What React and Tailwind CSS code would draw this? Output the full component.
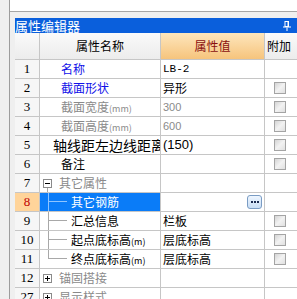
import React from 'react'

const CJK = "font-['Noto_Sans_CJK_SC','Noto_Sans',sans-serif]"

const rows = [
  { n: '1', name: '名称', tone: 'blue', value: 'LB-2', vkind: 'mono' },
  { n: '2', name: '截面形状', tone: 'blue', value: '异形', check: true },
  { n: '3', name: '截面宽度', unit: '(mm)', tone: 'gray', value: '300', vkind: 'grayNum', check: true },
  { n: '4', name: '截面高度', unit: '(mm)', tone: 'gray', value: '600', vkind: 'grayNum', check: true },
  { n: '5', name: '轴线距左边线距离', tone: 'big', value: '(150)', vkind: 'big', check: true },
  { n: '6', name: '备注', tone: 'black', value: '', check: true },
  { n: '7', name: '其它属性', tone: 'gray', tree: 'minus' },
  { n: '8', name: '其它钢筋', tone: 'sel', tree: 'child', selected: true, dots: true },
  { n: '9', name: '汇总信息', tone: 'black', tree: 'child', value: '栏板', check: true },
  { n: '10', name: '起点底标高', unit: '(m)', tone: 'black', tree: 'child', value: '层底标高', check: true },
  { n: '11', name: '终点底标高', unit: '(m)', tone: 'black', tree: 'last', value: '层底标高', check: true },
  { n: '12', name: '锚固搭接', tone: 'gray', tree: 'plus' },
  { n: '27', name: '显示样式', tone: 'gray', tree: 'plus' },
]

const toneClass = {
  blue: 'text-[#1010e8]',
  gray: 'text-[#8a8a8a]',
  black: 'text-black',
  big: 'text-black text-[14px]',
  sel: 'text-white',
}

const Checkbox = () => (
  <div className="ml-[9px] w-[12px] h-[12px] border border-[#a4a4a4] bg-gradient-to-br from-[#d4d4d4] via-[#f2f2f2] to-[#e0e0e0]" />
)

const PlusMinus = ({ plus }) => (
  <div className="w-[9px] h-[9px] border border-[#8a8a8a] bg-white flex items-center justify-center relative">
    <div className="w-[5px] h-px bg-black" />
    {plus && <div className="absolute w-px h-[5px] bg-black" />}
  </div>
)

const TreeLine = ({ last, selected }) => {
  const c = selected ? 'border-[#8ec4ff]' : 'border-[#a8a8a8]'
  return (
    <div className="ml-[8px] w-[19px] h-full flex flex-col">
      <div className={`h-1/2 border-l border-b ${c}`} />
      <div className={`h-1/2 ${last ? '' : `border-l ${c}`}`} />
    </div>
  )
}

const NameCell = ({ r }) => {
  const text = (
    <span className={`whitespace-nowrap ${toneClass[r.tone]}`}>
      {r.name}
      {r.unit && <span className="text-[9px]">{r.unit}</span>}
    </span>
  )
  if (r.tree === 'minus' || r.tree === 'plus') {
    return (
      <div className="flex items-center h-full">
        <div className="ml-[3px] relative">
          <PlusMinus plus={r.tree === 'plus'} />
          {r.tree === 'minus' && (
            <div className="absolute left-[4px] top-[9px] w-px h-[6px] bg-[#a8a8a8]" />
          )}
        </div>
        <div className="ml-[7px]">{text}</div>
      </div>
    )
  }
  if (r.tree) {
    return (
      <div className={`flex items-center h-full ${r.selected ? 'bg-[#0a7cf8]' : ''}`}>
        <TreeLine last={r.tree === 'last'} selected={r.selected} />
        <div className="ml-[4px]">{text}</div>
      </div>
    )
  }
  return (
    <div className={`flex items-center h-full ${r.tone === 'big' ? 'pl-[13px]' : 'pl-[21px]'}`}>{text}</div>
  )
}

const ValueCell = ({ r }) => {
  let cls = 'text-black text-[12px]'
  if (r.vkind === 'mono') cls = "font-['Liberation_Mono',monospace] text-[11px] text-black"
  if (r.vkind === 'grayNum') cls = "font-['Liberation_Sans',sans-serif] text-[11px] text-[#8a8a8a]"
  if (r.vkind === 'big') cls = "font-['Liberation_Sans',sans-serif] text-[13px] text-black"
  return (
    <div className="flex items-center h-full pl-[2px] pr-[2px]">
      <span className={`whitespace-nowrap flex-1 ${cls}`}>{r.value}</span>
      {r.dots && (
        <div className="w-[15px] h-[14px] rounded-[3px] border border-[#7a9cc4] bg-gradient-to-b from-[#eef6ff] to-[#c9def5] flex items-center justify-center gap-px">
          <div className="w-[2px] h-[2px] bg-[#1a2a50]" />
          <div className="w-[2px] h-[2px] bg-[#1a2a50]" />
          <div className="w-[2px] h-[2px] bg-[#1a2a50]" />
        </div>
      )}
    </div>
  )
}

const Row = ({ r }) => (
  <div className="flex h-[19px] shrink-0 border-b border-[#c6c6c6]">
    <div
      className={`w-[25px] shrink-0 border-r border-[#c6c6c6] flex items-center justify-center font-['Liberation_Serif',serif] text-[13px] ${
        r.selected ? 'bg-[#ffd49a] text-[#c00000]' : 'bg-[#f6f6f6] text-black'
      }`}
    >
      {r.n}
    </div>
    <div className="w-[121px] shrink-0 border-r border-[#c6c6c6] overflow-hidden text-[12px]">
      <NameCell r={r} />
    </div>
    <div className="w-[104px] shrink-0 border-r border-[#c6c6c6] overflow-hidden">
      <ValueCell r={r} />
    </div>
    <div className="flex-1 flex items-center">{r.check && <Checkbox />}</div>
  </div>
)

const PinIcon = () => (
  <svg width="8" height="10" viewBox="0 0 8 10" fill="none">
    <rect x="2" y="0.5" width="3.5" height="5" stroke="white" />
    <rect x="4.5" y="1" width="1.5" height="4.5" fill="white" />
    <rect x="0" y="5.5" width="8" height="1" fill="white" />
    <rect x="3.5" y="6.5" width="1" height="3.5" fill="white" />
  </svg>
)

export default function App() {
  return (
    <div className={`w-[297px] h-[299px] overflow-hidden bg-[#efefef] flex ${CJK}`}>
      <div className="w-[9px] shrink-0" />
      <div className="w-px shrink-0 bg-[#9c9c9c]" />
      <div className="flex-1 min-w-0 flex flex-col">
        <div className="h-[12px] shrink-0 bg-white border-b border-[#a6a6a6]" />
        <div className="pl-[5px] pt-[6px] flex-1 min-h-0 flex flex-col overflow-hidden">
          <div className="h-[15px] shrink-0 bg-[#0a5fdc] flex items-center justify-between pr-[6px]">
            <span className="text-white text-[13px] leading-none">属性编辑器</span>
            <PinIcon />
          </div>
          <div className="flex h-[27px] shrink-0 border-b border-[#c6c6c6] bg-white">
            <div className="w-[25px] shrink-0 border-r border-[#c6c6c6] bg-gradient-to-b from-[#fafafa] to-[#ececec]" />
            <div className="w-[121px] shrink-0 border-r border-[#c6c6c6] bg-gradient-to-b from-[#fafafa] to-[#ececec] flex items-center justify-center text-[12px] text-black">
              属性名称
            </div>
            <div className="w-[104px] shrink-0 border-r border-[#c6c6c6] bg-gradient-to-b from-[#fde6bc] to-[#f6c47c] flex items-center justify-center text-[12px] text-[#8a1010]">
              属性值
            </div>
            <div className="flex-1 bg-gradient-to-b from-[#fafafa] to-[#ececec] flex items-center pl-[2px] text-[12px] text-black whitespace-nowrap">
              附加
            </div>
          </div>
          <div className="bg-white flex flex-col">
            {rows.map((r) => (
              <Row key={r.n} r={r} />
            ))}
          </div>
        </div>
      </div>
    </div>
  )
}
